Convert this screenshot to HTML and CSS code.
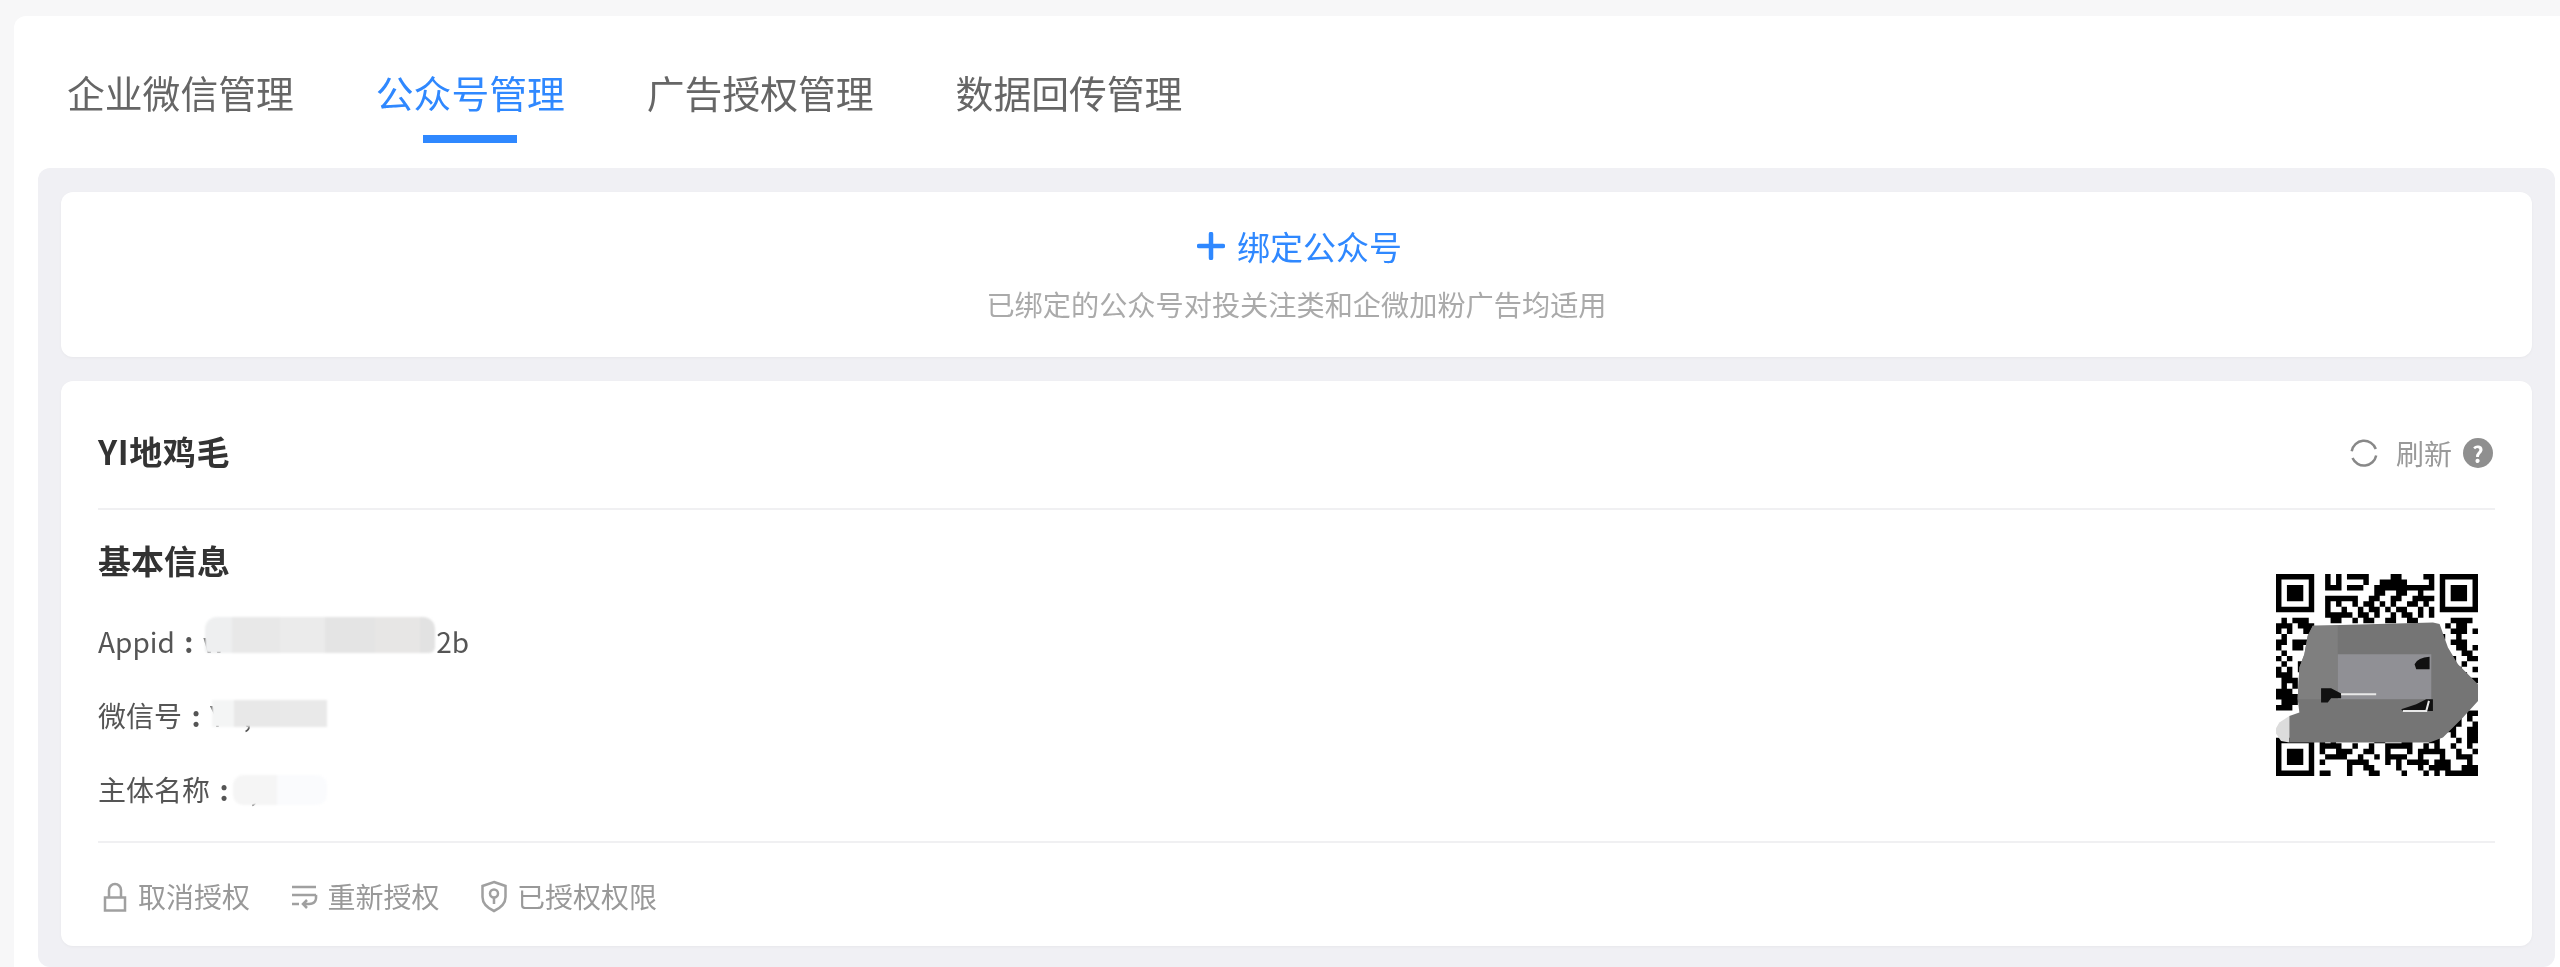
FILE: index.html
```html
<!DOCTYPE html>
<html lang="zh-CN">
<head>
<meta charset="utf-8">
<title>公众号管理</title>
<link rel="stylesheet" href="styles.css">
</head>
<body>
<main class="panel">
  <nav class="tabs">
    <a class="tab">企业微信管理</a>
    <a class="tab tab-active">公众号管理</a>
    <a class="tab">广告授权管理</a>
    <a class="tab">数据回传管理</a>
  </nav>
  <section class="content">
    <div class="card bind">
      <div class="bind-btn">
        <svg class="plus" viewBox="0 0 28 28"><path d="M14 2v24M2 14h24"/></svg>
        <span>绑定公众号</span>
      </div>
      <p class="bind-tip">已绑定的公众号对投关注类和企微加粉广告均适用</p>
    </div>
    <div class="card account">
      <header class="acc-head">
        <h2 class="acc-name">YI地鸡毛</h2>
        <div class="refresh">
          <svg class="refresh-icon" viewBox="0 0 28 28"><path d="M1.700 12.200A12.500 12.500 0 0 1 25.800 10M26.200 16.500A12.500 12.500 0 0 1 2.500 19"/></svg>
          <span class="refresh-text">刷新</span>
          <span class="help">?</span>
        </div>
      </header>
      <div class="info">
        <div class="info-list">
          <h3 class="info-title">基本信息</h3>
          <p class="row">Appid<span class="colon">:</span>w<span class="redacted"></span>2b<i class="patch patch-a"></i></p>
          <p class="row">微信号<span class="colon">:</span>Y&nbsp;&nbsp;&nbsp;,<i class="patch patch-b"></i></p>
          <p class="row">主体名称<span class="colon">:</span>&nbsp;&nbsp;,<i class="patch patch-c"></i></p>
        </div>
        <svg class="qr" viewBox="20 20 605 605">
          <g transform="translate(20 20) scale(16.35)">
            <path class="qr-finder" d="M0 0h7v7h-7zM1 1v5h5v-5zM2 2h3v3h-3zM30 0h7v7h-7zM31 1v5h5v-5zM32 2h3v3h-3zM0 30h7v7h-7zM1 31v5h5v-5zM2 32h3v3h-3z"/>
            <path class="qr-mod" d="M9 .5H10M11 .5H12M13 .5H17M21 .5H23M27 .5H29
            M9 1.5H10M11 1.5H12M16 1.5H17M19 1.5H24M28 1.5H29
            M9 2.5H12M13 2.5H16M18 2.5H29
            M18 3.5H20M22 3.5H24M26 3.5H27
            M9 4.5H15M17 4.5H19M21 4.5H23M25 4.5H29
            M9 5.5H10M11 5.5H12M14 5.5H15M16 5.5H18M19 5.5H20M21 5.5H22M24 5.5H26M27 5.5H28
            M9 6.5H10M12 6.5H13M15 6.5H16M17 6.5H19M20 6.5H21M22 6.5H24M26 6.5H27M28 6.5H29
            M9 7.5H14M15 7.5H17M18 7.5H19M21 7.5H22M23 7.5H25M26 7.5H27M28 7.5H29
            M1 8.5H2M3 8.5H6M10 8.5H12M14 8.5H15M16 8.5H18M20 8.5H22M24 8.5H26M32 8.5H36
            M0 9.5H3M4 9.5H7M31 9.5H32M33 9.5H35
            M0 10.5H1M2 10.5H3M5 10.5H7M32 10.5H35M36 10.5H37
            M1 11.5H2M30 11.5H31M33 11.5H34
            M0 12.5H2M3 12.5H6M32 12.5H35
            M0 13.5H1M3 13.5H5M33 13.5H35M36 13.5H37
            M1 14.5H2M34 14.5H36
            M0 15.5H1M2 15.5H3M32 15.5H33M35 15.5H37
            M1 16.5H2M4 16.5H5M31 16.5H33M34 16.5H35
            M0 17.5H1M2 17.5H3M4 17.5H5M33 17.5H34M36 17.5H37
            M0 18.5H3M32 18.5H35
            M1 19.5H4M34 19.5H37
            M1 20.5H2M3 20.5H4
            M0 21.5H3
            M0 22.5H4
            M1 23.5H4
            M0 24.5H3
            M35 25.5H37
            M33 26.5H34M35 26.5H36
            M32 27.5H34M36 27.5H37
            M31 28.5H33M35 28.5H37
            M32 29.5H33M35 29.5H37
            M8 30.5H9M10 30.5H11M18 30.5H20M23 30.5H25M28 30.5H30M33 30.5H34M35 30.5H37
            M8 31.5H12M14 31.5H15M17 31.5H18M20 31.5H25M27 31.5H28M29 31.5H30M32 31.5H33M35 31.5H36
            M8 32.5H9M11 32.5H14M16 32.5H18M20 32.5H21M24 32.5H25M26 32.5H31M33 32.5H34M36 32.5H37
            M9 33.5H13M15 33.5H16M18 33.5H19M20 33.5H24M26 33.5H27M30 33.5H31M33 33.5H36
            M8 34.5H9M13 34.5H17M20 34.5H21M22 34.5H23M24 34.5H28M29 34.5H32M35 34.5H36
            M13 35.5H14M16 35.5H18M22 35.5H23M26 35.5H27M28 35.5H32M34 35.5H37
            M8 36.5H10M13 36.5H14M17 36.5H19M23 36.5H24M27 36.5H28M29 36.5H30M31 36.5H37"/>
          </g>
          <path class="mask-light" d="M60 445L30 465L15 490L35 520L60 525Z"/>
          <path class="mask-dark" d="M130 175L490 165L510 170L535 240L565 290L625 350V400L580 450L520 510L480 525H60V445L90 435L85 395L90 300L105 260L115 205Z"/>
          <path class="mask-side" d="M130 175H205V395H85L90 300L105 260L115 205Z"/>
          <path class="mask-mid" d="M205 260H485V395H205Z"/>
          <path class="mark" d="M435 290Q445 270 480 268V305H440ZM155 362H185L215 378V392H185L175 405H155ZM395 425L440 410L470 395H490V430H400Z"/>
          <path class="mark-line" d="M215 380H320"/>
          <path class="mark-line" d="M400 430H470L478 400"/>
        </svg>
      </div>
      <footer class="actions">
        <a class="action">
          <svg class="act-icon" viewBox="0 0 34 34"><path d="M7 18.500h20v13H7zM11 18v-7a6 6 0 0 1 12 0v7"/></svg>
          <span>取消授权</span>
        </a>
        <a class="action">
          <svg class="act-icon" viewBox="0 0 34 34"><path d="M4 8h24M4 16h24M4 25h7M28 16q1 9-7 9h-5M19 21l-4 4 4 4"/></svg>
          <span>重新授权</span>
        </a>
        <a class="action">
          <svg class="act-icon" viewBox="0 0 34 34"><path d="M17 3l11.500 4v11c0 7-5 11-11.500 14C10.500 29 5.500 25 5.500 18V7zM17 19v6"/><circle cx="17" cy="14.500" r="4"/></svg>
          <span>已授权权限</span>
        </a>
      </footer>
    </div>
  </section>
</main>
</body>
</html>
```

FILE: styles.css
```css
* { box-sizing: border-box; }
html, body { margin: 0; height: 967px; overflow: hidden; }
body {
  background: #f7f7f8;
  font-family: "Noto Sans CJK SC", "Noto Sans", sans-serif;
  color: #555;
  padding: 16px 0 0 14px;
}
.panel {
  background: #fff;
  border-radius: 12px 0 0 0;
  height: 951px;
  filter: blur(.6px);
}
.tabs {
  display: flex;
  gap: 82px;
  padding: 45px 0 25px 53px;
}
.tab {
  display: flex;
  flex-direction: column;
  align-items: center;
  font-size: 37.800px;
  line-height: 62px;
  color: #666;
}
.tab::after {
  content: "";
  width: 94px;
  height: 8px;
  margin-top: 12px;
  background: transparent;
}
.tab-active { color: #2f88ff; }
.tab-active::after { background: #2f88ff; }
.content {
  margin: 0 5px 0 24px;
  padding: 24px 23px 21px;
  background: #f0f0f4;
  border-radius: 12px;
  display: flex;
  flex-direction: column;
  gap: 24px;
}
.card {
  background: #fff;
  border-radius: 12px;
  box-shadow: 0 1px 3px rgba(0, 0, 0, .04);
}
.bind {
  display: flex;
  flex-direction: column;
  align-items: center;
  padding: 32px 0 33px;
}
.bind-btn {
  display: flex;
  align-items: center;
  gap: 12px;
  margin-left: 6px;
  font-size: 33px;
  line-height: 44px;
  color: #2f88ff;
}
.plus { width: 28px; height: 28px; }
.plus path { fill: none; stroke: #2f88ff; stroke-width: 4.500; stroke-linecap: round; }
.bind-tip {
  margin: 16px 0 0;
  font-size: 28.200px;
  line-height: 40px;
  color: #aaa;
}
.account { padding: 0 37px; }
.acc-head {
  display: flex;
  align-items: center;
  justify-content: space-between;
  padding: 50px 0 33px;
  border-bottom: 2px solid #f0f0f2;
}
.acc-name, .info-title {
  margin: 0;
  font-size: 33px;
  font-weight: 700;
  color: #333;
}
.acc-name { line-height: 40px; margin-bottom: 4px; letter-spacing: .6px; }
.info-title { line-height: 44px; margin-bottom: 7px; }
.refresh { display: flex; align-items: center; font-size: 28px; line-height: 44px; color: #999; }
.refresh-icon { width: 28px; height: 28px; margin-right: 18px; }
.refresh-icon path { fill: none; stroke: #888; stroke-width: 2.500; }
.refresh-text { width: 56px; }
.help {
  width: 30px;
  height: 30px;
  margin: 0 2px 0 11px;
  border-radius: 50%;
  background: #8f8f8f;
  color: #fff;
  font-size: 22px;
  font-weight: 700;
  line-height: 30px;
  text-align: center;
}
.info {
  display: flex;
  align-items: flex-start;
  justify-content: space-between;
  padding: 28px 17px 30px 0;
  border-bottom: 2px solid #f0f0f2;
}
.info-list { display: flex; flex-direction: column; gap: 30px; }
.row {
  position: relative;
  margin: 0;
  font-size: 28px;
  line-height: 44px;
  color: #555;
}
.colon { display: inline-block; width: 28px; text-align: center; font-weight: 700; }
.redacted { display: inline-block; width: 211px; }
.patch { position: absolute; display: block; filter: blur(1px); }
.patch-a {
  left: 107px; top: -2px; width: 230px; height: 36px;
  border-radius: 12px 12px 6px 4px;
  background: linear-gradient(90deg, #eeeff0 0 27px, #e8e8e8 27px 75px, #ebebeb 75px 120px, #e4e4e4 120px 170px, #e7e6e5 170px 215px, #e2e2e2 215px);
}
.patch-b {
  left: 114px; top: 7px; width: 115px; height: 27px;
  background: linear-gradient(90deg, #f4f5f5 0 22px, #e8e8e8 22px 68px, #e9e9e9 68px);
}
.patch-c {
  left: 135px; top: 8px; width: 94px; height: 30px;
  border-radius: 10px;
  background: linear-gradient(90deg, #f5f5f5 0 44px, #fafbfd 44px);
}
.qr { width: 202px; height: 202px; margin-top: 36px; filter: blur(.6px); }
.qr-finder { fill: #000; fill-rule: evenodd; }
.qr-mod { fill: none; stroke: #000; stroke-width: 1; }
.mask-light { fill: #dcdcdc; }
.mask-dark { fill: #757575; }
.mask-side { fill: #7f7f7f; }
.mask-mid { fill: #909095; }
.mark { fill: #111; }
.mark-line { fill: none; stroke: #e8e8e8; stroke-width: 6; }
.actions {
  display: flex;
  gap: 37.500px;
  padding: 31px 0 28px;
  font-size: 28px;
  line-height: 44px;
  color: #999;
}
.action { display: flex; align-items: center; gap: 6px; }
.act-icon { width: 34px; height: 34px; }
.act-icon path, .act-icon circle { fill: none; stroke: #a0a0a0; stroke-width: 2.500; }
```
